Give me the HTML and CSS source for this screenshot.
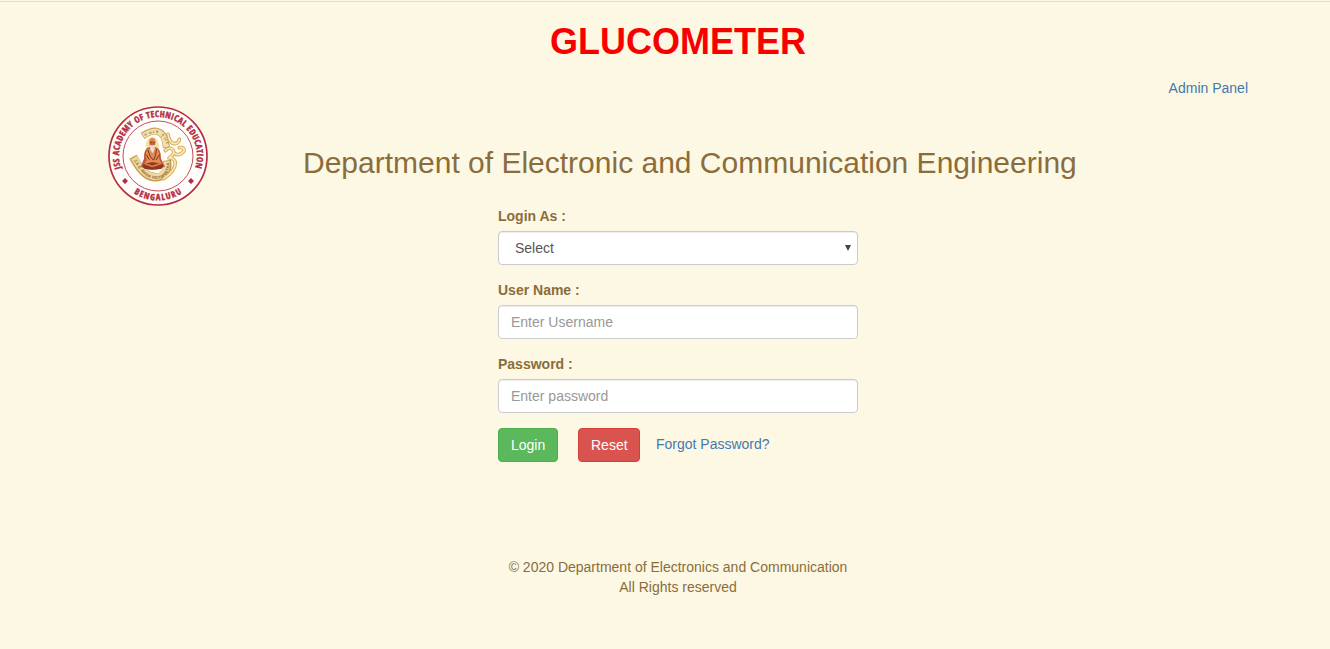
FILE: index.html
```html
<!DOCTYPE html>
<html lang="en">
<head>
<meta charset="utf-8">
<title>Glucometer</title>
<link rel="stylesheet" href="styles.css">
</head>
<body>
<div class="container">
  <h1 class="title">GLUCOMETER</h1>
  <div class="admin"><a href="#">Admin Panel</a></div>
  <header class="banner">
    <svg class="logo" viewBox="24 18 300 300" role="img" aria-label="JSS Academy of Technical Education, Bengaluru">
      <defs>
        <path id="ring-top" d="M63 205A117 117 0 1 1 285 205"/>
        <path id="ring-bottom" d="M91 272A133 133 0 0 0 257 272"/>
        <path id="scroll-top" d="M136 107Q178 82 196 122L201 143"/>
        <path id="scroll-bottom" d="M101 181C124 222 147 243 182 235Q211 226 207 184"/>
      </defs>
      <circle cx="174" cy="168" r="147" fill="#fffefa" stroke="#b52c43" stroke-width="5"/>
      <circle cx="174" cy="168" r="105" fill="#fffefa" stroke="#c34c60" stroke-width="3"/>
      <text class="ring-text"><textPath href="#ring-top" textLength="440" lengthAdjust="spacing">JSS ACADEMY OF TECHNICAL EDUCATION</textPath></text>
      <text class="ring-text"><textPath href="#ring-bottom" startOffset="13" textLength="152" lengthAdjust="spacing">BENGALURU</textPath></text>
      <path fill="#b52c43" d="M75 234l9 9-9 9-9-9zM273 234l9 9-9 9-9-9z"/>
      <g fill="none" stroke-linecap="round" stroke-linejoin="round">
        <path stroke="#c9a05a" stroke-width="21" stroke-linecap="butt" d="M128 108Q177 75 194 116L200 143"/>
        <path stroke="#f1dfb0" stroke-width="16" stroke-linecap="butt" d="M130 107Q177 77 193 116L199 141"/>
        <path stroke="#c69b4c" stroke-width="25" stroke-linecap="butt" d="M99 170C122 213 145 239 180 230Q207 221 201 181"/>
        <path stroke="#eed99f" stroke-width="20" stroke-linecap="butt" d="M102 173C125 215 147 237 179 228Q203 218 199 184"/>
        <path stroke="#d8ae55" stroke-width="11" d="M196 152Q211 138 220 151Q226 162 207 174Q223 174 226 188Q226 212 191 236M223 160Q239 170 252 153Q254 140 238 143M204 103Q209 132 225 131Q237 129 238 118"/>
        <path stroke="#fbe9b8" stroke-width="5" d="M196 152Q211 138 220 151Q226 162 207 174Q223 174 226 188Q226 212 191 236M223 160Q239 170 252 153Q254 140 238 143M204 103Q209 132 225 131Q237 129 238 118"/>
      </g>
      <text class="scroll-text scroll-text-top"><textPath href="#scroll-top" textLength="84">ಕಾಯಕವೇ ಕೈಲಾಸ</textPath></text>
      <text class="scroll-text"><textPath href="#scroll-bottom" textLength="164">J.S.S. MAHA VIDYAPEETHA</textPath></text>
      <ellipse cx="157" cy="136" rx="20" ry="24" fill="#f6e3a3"/>
      <path fill="#bc5839" d="M146 142Q130 149 132 176L122 201Q157 216 195 200L183 176Q183 147 168 142Z"/>
      <path fill="#e58b53" d="M142 148Q134 164 140 180L131 194Q159 182 186 194L177 175Q181 155 169 145Z"/>
      <path fill="#923623" d="M127 195Q155 179 191 195L185 206Q155 212 133 206Z"/>
      <path stroke="#d97e45" stroke-width="5" fill="none" d="M135 191L157 199L182 191"/>
      <ellipse cx="157" cy="129" rx="9" ry="13" fill="#c4683f"/>
      <path fill="#e88b48" d="M147 126Q148 112 158 113Q168 114 167 128Q158 118 147 126Z"/>
      <path fill="#e9dfd3" d="M149 134Q157 138 166 134L163 150L158 160L151 149Z"/>
      <path stroke="#793226" stroke-width="3" fill="none" d="M144 150Q151 176 161 180Q169 165 169 147M139 164L148 179M178 164L168 180M152 128h4M160 128h4"/>
    </svg>
    <h2 class="department">Department of Electronic and Communication Engineering</h2>
  </header>
  <form class="login-form">
    <div class="field">
      <label for="role">Login As :</label>
      <div class="select-wrap">
        <select id="role" class="control role"><option>Select</option></select>
        <svg class="arrow" viewBox="0 0 6 6"><path d="M0 0h6L3 6z"/></svg>
      </div>
    </div>
    <div class="field">
      <label for="username">User Name :</label>
      <input id="username" class="control" type="text" placeholder="Enter Username">
    </div>
    <div class="field">
      <label for="password">Password :</label>
      <input id="password" class="control" type="password" placeholder="Enter password">
    </div>
    <div class="actions">
      <button class="button login" type="button">Login</button>
      <button class="button reset" type="reset">Reset</button>
      <a class="forgot" href="#">Forgot Password?</a>
    </div>
  </form>
  <footer class="footer">© 2020 Department of Electronics and Communication<br>All Rights reserved</footer>
</div>
</body>
</html>
```
FILE: styles.css
```css
* { box-sizing: border-box; }
html { background: #fdf8e4; }
body {
  margin: 1px 0 0;
  border-top: 1px solid #dcddd6;
  color: #8a6d3b;
  font: 14px/20px "Liberation Sans", Arial, sans-serif;
}
a { color: #4479ae; text-decoration: none; }
.container { width: 1170px; margin-left: 93px; padding: 20px 15px 0; }
.title { margin: 0; color: #f90000; font-size: 36px; line-height: 40px; text-align: center; }
.admin { margin-top: 16px; text-align: right; }
.banner { display: flex; height: 100px; margin-top: 8px; }
.logo { width: 100px; height: 100px; flex: none; }
.department { margin: 40px 0 0 95px; font-size: 30px; font-weight: 500; line-height: 33px; white-space: nowrap; }
.ring-text { fill: #b52c43; stroke: #b52c43; stroke-width: 1.3; font-family: "Liberation Sans Narrow", "Open Sans Condensed", "DejaVu Sans Condensed", "Liberation Sans", sans-serif; font-stretch: condensed; font-size: 26px; font-weight: bold; }
.scroll-text { fill: #8e6335; font-size: 12px; font-weight: bold; }
.scroll-text-top { font-size: 9px; }
.login-form { width: 360px; margin: 0 auto; }
.field { margin-bottom: 15px; }
.field label { display: block; margin-bottom: 5px; font-weight: bold; }
.control {
  display: block;
  width: 100%;
  height: 34px;
  padding: 6px 12px;
  border: 1px solid #ccc;
  border-radius: 4px;
  background: #fff;
  box-shadow: inset 0 1px 1px rgba(0, 0, 0, .075);
  color: #555;
  font: inherit;
}
.control::placeholder { color: #999; opacity: 1; }
.role { padding-left: 16px; appearance: none; }
.select-wrap { position: relative; }
.arrow { position: absolute; top: 14px; right: 7px; width: 6px; height: 6px; fill: #444; }
.actions { display: flex; align-items: flex-start; }
.button { height: 34px; padding: 6px 12px; border: 1px solid; border-radius: 4px; color: #fff; font: inherit; }
.login { width: 60px; margin-right: 20px; border-color: #4cae4c; background: #5cb85c; }
.reset { width: 62px; margin-right: 16px; border-color: #d43f3a; background: #d9534f; }
.forgot { margin-top: 6px; }
.footer { margin-top: 95px; text-align: center; }
```
